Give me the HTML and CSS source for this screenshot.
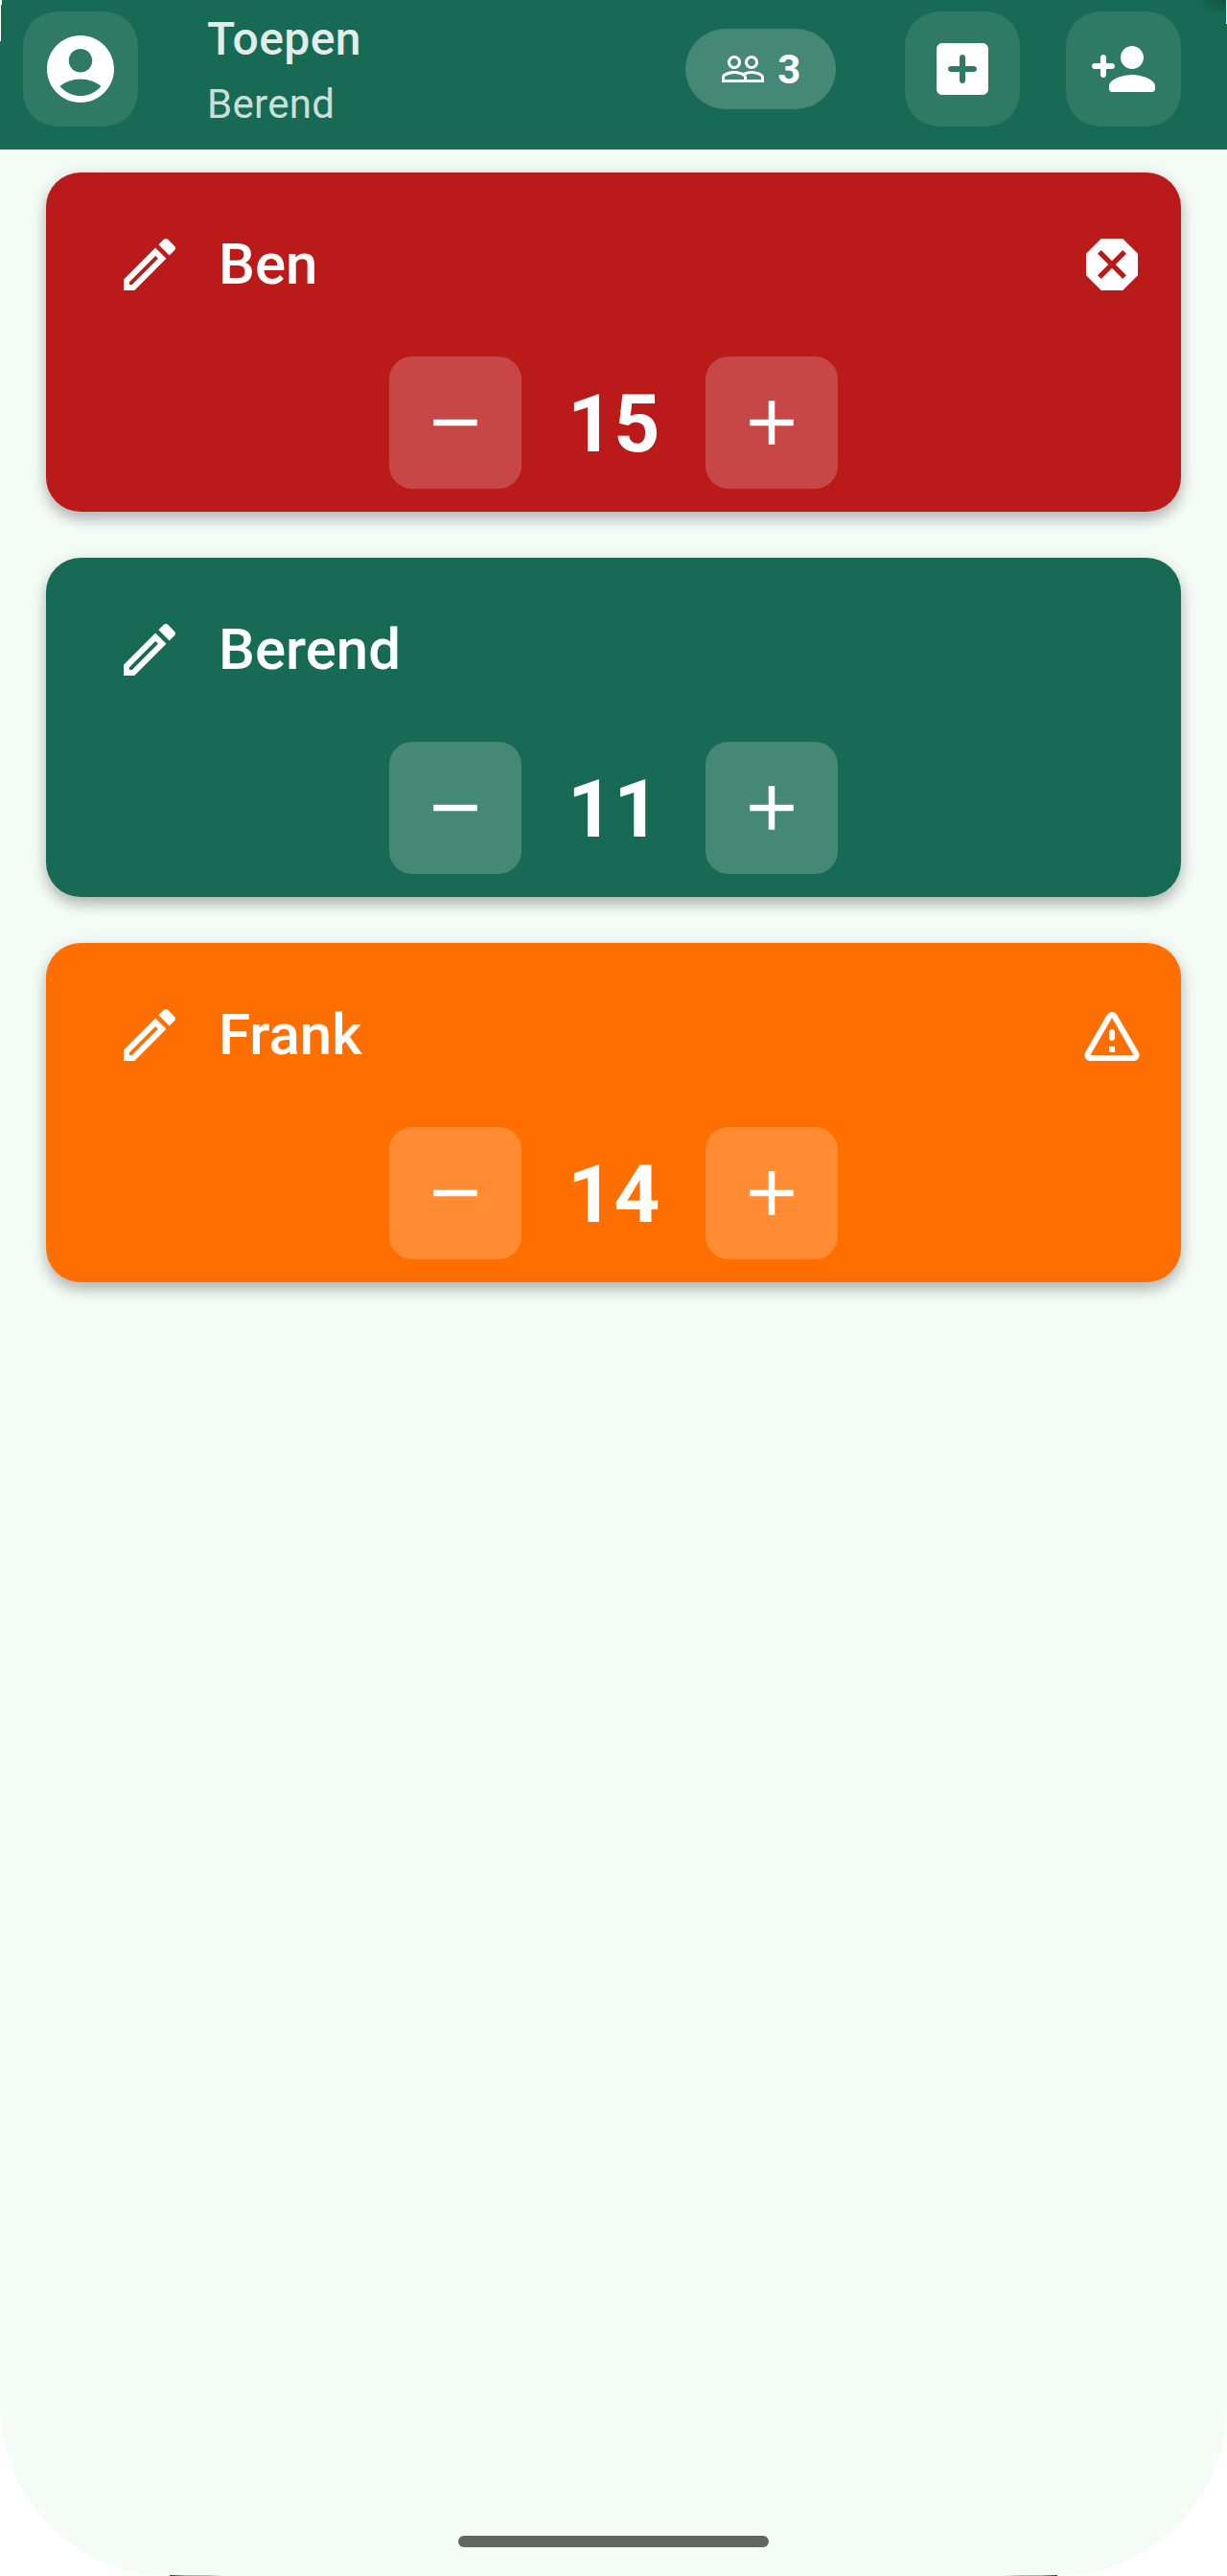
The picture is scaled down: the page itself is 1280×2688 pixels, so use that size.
FILE: index.html
```html
<!DOCTYPE html>
<html lang="nl">
<head>
<meta charset="utf-8">
<title>Toepen</title>
<link rel="stylesheet" href="styles.css">
</head>
<body>
<svg class="symbols" aria-hidden="true">
  <symbol id="edit" viewBox="0 0 24 24"><path d="M14.06 9.02l.92.92L5.92 19H5v-.92l9.06-9.06M17.66 3c-.25 0-.51.1-.7.29l-1.83 1.83 3.75 3.75 1.83-1.83c.39-.39.39-1.02 0-1.41l-2.34-2.34c-.2-.2-.45-.29-.71-.29zm-3.6 3.19L3 17.25V21h3.75L17.81 9.94l-3.75-3.75z"/></symbol>
  <symbol id="minus" viewBox="0 0 24 24"><path d="M19 13H5v-2h14v2z"/></symbol>
  <symbol id="plus" viewBox="0 0 24 24"><path d="M19 13h-6v6h-2v-6H5v-2h6V5h2v6h6v2z"/></symbol>
</svg>
<div class="screen">
  <header class="bar">
    <button class="tile" aria-label="Account"><svg class="icon-account" viewBox="0 0 24 24"><path d="M12 2C6.48 2 2 6.48 2 12s4.48 10 10 10 10-4.48 10-10S17.52 2 12 2zm0 4c1.93 0 3.5 1.57 3.5 3.5S13.93 13 12 13s-3.5-1.57-3.5-3.5S10.07 6 12 6zm0 14c-2.03 0-4.43-.82-6.14-2.88C7.55 15.8 9.68 15 12 15s4.45.8 6.14 2.12C16.43 19.18 14.03 20 12 20z"/></svg></button>
    <div class="heading">
      <div class="title">Toepen</div>
      <div class="subtitle">Berend</div>
    </div>
    <div class="count"><svg class="icon-people" viewBox="0 0 24 24"><path d="M16.5 13c-1.2 0-3.07.34-4.5 1-1.43-.67-3.3-1-4.5-1C5.33 13 1 14.08 1 16.25V19h22v-2.75c0-2.17-4.33-3.25-6.5-3.25zm-4 4.5h-10v-1.25c0-.54 2.56-1.75 5-1.75s5 1.21 5 1.75v1.25zm9 0H14v-1.25c0-.46-.2-.86-.52-1.22.88-.3 1.96-.53 3.02-.53 2.44 0 5 1.21 5 1.75v1.25zM7.5 12c1.93 0 3.5-1.57 3.5-3.5S9.43 5 7.5 5 4 6.57 4 8.5 5.57 12 7.5 12zm0-5.5c1.1 0 2 .9 2 2s-.9 2-2 2-2-.9-2-2 .9-2 2-2zm9 5.5c1.93 0 3.5-1.57 3.5-3.5S18.43 5 16.5 5 13 6.57 13 8.5s1.57 3.5 3.5 3.5zm0-5.5c1.1 0 2 .9 2 2s-.9 2-2 2-2-.9-2-2 .9-2 2-2z"/></svg><span>3</span></div>
    <div class="actions">
      <button class="tile" aria-label="Nieuw"><svg class="icon" viewBox="0 0 24 24"><path d="M19 3H5c-1.1 0-2 .9-2 2v14c0 1.1.9 2 2 2h14c1.1 0 2-.9 2-2V5c0-1.1-.9-2-2-2zm-3 10h-3v3c0 .55-.45 1-1 1s-1-.45-1-1v-3H8c-.55 0-1-.45-1-1s.45-1 1-1h3V8c0-.55.45-1 1-1s1 .45 1 1v3h3c.55 0 1 .45 1 1s-.45 1-1 1z"/></svg></button>
      <button class="tile" aria-label="Speler toevoegen"><svg class="icon" viewBox="0 0 24 24"><path d="M15 12c2.21 0 4-1.79 4-4s-1.79-4-4-4-4 1.79-4 4 1.79 4 4 4zm-9-2V8c0-.55-.45-1-1-1s-1 .45-1 1v2H2c-.55 0-1 .45-1 1s.45 1 1 1h2v2c0 .55.45 1 1 1s1-.45 1-1v-2h2c.55 0 1-.45 1-1s-.45-1-1-1H6zm9 4c-2.67 0-8 1.34-8 4v1c0 .55.45 1 1 1h14c.55 0 1-.45 1-1v-1c0-2.66-5.33-4-8-4z"/></svg></button>
    </div>
  </header>
  <main class="players">
    <section class="card red">
      <div class="row"><svg class="icon"><use href="#edit"/></svg><h2 class="name">Ben</h2><svg class="icon" viewBox="0 0 24 24"><path d="M15.73 3H8.27L3 8.27v7.46L8.27 21h7.46L21 15.73V8.27L15.73 3zM17 15.74L15.74 17 12 13.26 8.26 17 7 15.74 10.74 12 7 8.26 8.26 7 12 10.74 15.74 7 17 8.26 13.26 12 17 15.74z"/></svg></div>
      <div class="score"><button class="step" aria-label="Min"><svg><use href="#minus"/></svg></button><span class="value">15</span><button class="step" aria-label="Plus"><svg><use href="#plus"/></svg></button></div>
    </section>
    <section class="card green">
      <div class="row"><svg class="icon"><use href="#edit"/></svg><h2 class="name">Berend</h2></div>
      <div class="score"><button class="step" aria-label="Min"><svg><use href="#minus"/></svg></button><span class="value">11</span><button class="step" aria-label="Plus"><svg><use href="#plus"/></svg></button></div>
    </section>
    <section class="card orange">
      <div class="row"><svg class="icon"><use href="#edit"/></svg><h2 class="name">Frank</h2><svg class="icon" viewBox="0 0 24 24"><path d="M12 5.99L19.53 19H4.47L12 5.99M2.74 18c-.77 1.33.19 3 1.73 3h15.06c1.54 0 2.5-1.67 1.73-3L13.73 4.99c-.77-1.33-2.69-1.33-3.46 0L2.74 18zM11 11v2c0 .55.45 1 1 1s1-.45 1-1v-2c0-.55-.45-1-1-1s-1 .45-1 1zm0 5h2v2h-2z"/></svg></div>
      <div class="score"><button class="step" aria-label="Min"><svg><use href="#minus"/></svg></button><span class="value">14</span><button class="step" aria-label="Plus"><svg><use href="#plus"/></svg></button></div>
    </section>
  </main>
  <div class="home-indicator"></div>
</div>
</body>
</html>
```
FILE: styles.css
```css
* { box-sizing: border-box; }
body { margin: 0; background: #fff; font-family: Roboto, sans-serif; color: #fff; }
svg { display: block; fill: currentColor; flex: none; }
button { border: 0; padding: 0; font: inherit; color: inherit; }
.symbols { display: none; }

.screen {
  position: relative;
  display: flex;
  flex-direction: column;
  height: 2688px;
  background: #f5fbf7;
  border-radius: 0 0 178px 178px;
  overflow: hidden;
}
/* Bezel slivers: light at the top corners, dark along the bottom edge */
.screen::before {
  content: "";
  position: absolute;
  inset: 0;
  pointer-events: none;
  background:
    linear-gradient(#fff, #fff) 0 0 / 2px 5px no-repeat,
    linear-gradient(#fff, #fff) 0 0 / 1px 43px no-repeat,
    linear-gradient(#fff, #fff) 100% 0 / 1px 25px no-repeat,
    radial-gradient(ellipse at 100% 0, rgba(0, 0, 0, .25), transparent 70%) 100% 0 / 34px 16px no-repeat,
    linear-gradient(90deg, #333, #aaa 30%, #bbb 75%, transparent) 177px 100% / 55px 1px no-repeat,
    linear-gradient(270deg, #333, #aaa 30%, #bbb 75%, transparent) 1048px 100% / 55px 1px no-repeat;
}

.bar {
  display: flex;
  align-items: flex-start;
  height: 156px;
  padding: 12px 48px 0 24px;
  background: #176b54;
}
.tile {
  display: grid;
  place-items: center;
  width: 120px;
  height: 120px;
  border-radius: 36px;
  background: rgba(255, 255, 255, .1);
}
.icon { width: 72px; height: 72px; }
.icon-account { width: 84px; height: 84px; }
.icon-people { width: 48px; height: 48px; }
.heading { flex: 1; margin-left: 72px; padding-top: 1px; }
.title {
  font-size: 48px;
  line-height: 56px;
  font-weight: 500;
  letter-spacing: .45px;
  color: rgba(255, 255, 255, .9);
}
.subtitle {
  margin-top: 12px;
  font-size: 42px;
  line-height: 56px;
  letter-spacing: .3px;
  color: rgba(255, 255, 255, .8);
}
.count {
  display: flex;
  align-items: center;
  gap: 12px;
  height: 84px;
  margin-top: 18px;
  padding: 0 36px;
  border-radius: 42px;
  background: rgba(255, 255, 255, .2);
  font-size: 42px;
  font-weight: 700;
  letter-spacing: .75px;
}
.actions { display: flex; gap: 48px; margin-left: 72px; }

.players { display: flex; flex-direction: column; gap: 48px; padding: 24px 48px; }
.card {
  height: 354px;
  padding: 24px 36px 24px 72px;
  border-radius: 36px;
  box-shadow: 0 8px 14px rgba(0, 0, 0, .24), 0 2px 24px rgba(0, 0, 0, .07);
}
.red { background: #ba1a1a; }
.green { background: #176b54; }
.orange { background: #ff6f00; }
.row { display: flex; align-items: center; height: 144px; }
.name { flex: 1; margin: 0 0 0 36px; font-size: 60px; line-height: 84px; font-weight: 500; }
.score {
  display: flex;
  align-items: center;
  justify-content: center;
  gap: 48px;
  height: 138px;
  margin: 24px 0 0 -36px;
}
.step {
  display: grid;
  place-items: center;
  width: 138px;
  height: 138px;
  border-radius: 24px;
  background: rgba(255, 255, 255, .2);
}
.step svg { width: 78px; height: 78px; }
.value { width: 96px; padding-top: 3px; font-size: 84px; line-height: 108px; font-weight: 700; }

.home-indicator {
  width: 324px;
  height: 12px;
  margin: auto auto 30px;
  border-radius: 6px;
  background: #636561;
}
```
